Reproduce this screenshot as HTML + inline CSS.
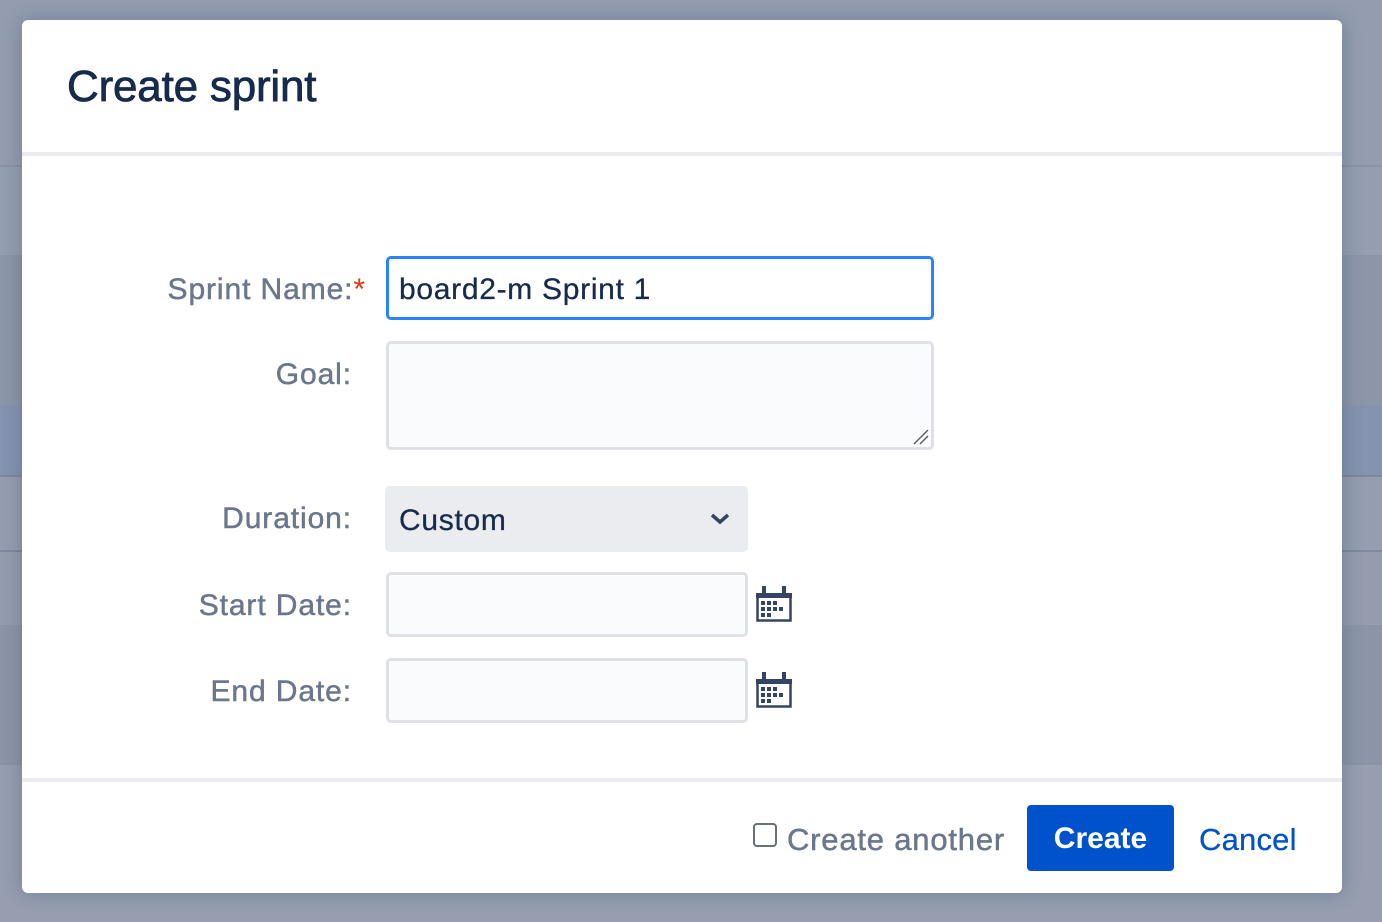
<!DOCTYPE html>
<html><head><meta charset="utf-8"><style>
html,body{margin:0;padding:0;}
body{width:1382px;height:922px;position:relative;overflow:hidden;font-family:"Liberation Sans",Helvetica,Arial,sans-serif;background:#949db0;}
.band{position:absolute;left:0;width:1382px;}
.dlg{position:absolute;left:22px;top:20px;width:1320px;height:873px;background:#fff;border-radius:6px;box-shadow:0 0 20px rgba(9,30,66,.25);}
.abs{position:absolute;}
h1{position:absolute;left:45px;top:42px;margin:0;font-size:44px;font-weight:normal;color:#172b4d;letter-spacing:-0.2px;-webkit-text-stroke:0.8px #172b4d;}
.sep{position:absolute;left:0;width:1320px;height:4px;background:#ebecf0;}
.lbl{position:absolute;right:990px;font-size:30px;color:#6b778c;text-align:right;white-space:nowrap;letter-spacing:0.9px;-webkit-text-stroke:0.5px #6b778c;}
.inp{position:absolute;box-sizing:border-box;border:3px solid #dfe1e6;border-radius:5px;background:#fafbfc;}
.tx{font-size:30px;color:#172b4d;letter-spacing:0.7px;-webkit-text-stroke:0.3px #172b4d;}
</style></head><body>
<div class="band" style="top:0;height:165px;background:#949db0"></div>
<div class="band" style="top:165px;height:90px;background:#959eb0;border-top:2px solid #8a93a6"></div>
<div class="band" style="top:255px;height:150px;background:#8d96a9"></div>
<div class="band" style="top:405px;height:70px;background:#8494b0"></div>
<div class="band" style="top:475px;height:75px;background:#959db0;border-top:2px solid #7f889b"></div>
<div class="band" style="top:550px;height:75px;background:#949cae;border-top:2px solid #7f889b"></div>
<div class="band" style="top:625px;height:140px;background:#8c95a8"></div>
<div class="band" style="top:765px;height:157px;background:#969eb0"></div>

<div class="dlg">
<h1>Create sprint</h1>
<div class="sep" style="top:132px"></div>

<div class="lbl" style="top:253px;right:976px">Sprint Name:<span style="color:#de350b;-webkit-text-stroke:0">*</span></div>
<div class="inp" style="left:364px;top:236px;width:548px;height:64px;border-color:#2684ff;background:#fff;"></div>
<div class="abs tx" style="left:377px;top:253px;">board2-m Sprint 1</div>

<div class="lbl" style="top:338px">Goal:</div>
<div class="inp" style="left:364px;top:321px;width:548px;height:109px;"></div>
<svg class="abs" style="left:890px;top:408px" width="18" height="18"><path d="M2 16 L16 2 M8 16 L16 8" stroke="#555" stroke-width="1.3"/></svg>

<div class="lbl" style="top:482px">Duration:</div>
<div class="abs" style="left:363px;top:466px;width:363px;height:66px;background:#ebecf0;border-radius:5px;"></div>
<div class="abs tx" style="left:377px;top:484px;">Custom</div>
<svg class="abs" style="left:687px;top:492px" width="22" height="14"><path d="M3 3 L11 10 L19 3" fill="none" stroke="#344563" stroke-width="3.5"/></svg>

<div class="lbl" style="top:569px">Start Date:</div>
<div class="inp" style="left:364px;top:552px;width:362px;height:65px;"></div>
<svg class="abs" style="left:734px;top:566px" width="36" height="36" fill="#344563"><rect x="1.5" y="9" width="33" height="25.5" fill="none" stroke="#344563" stroke-width="2.5"/><rect x="0" y="7" width="36" height="5"/><rect x="6" y="0" width="4" height="9"/><rect x="26" y="0" width="4" height="9"/><rect x="5" y="15" width="4" height="4"/><rect x="11" y="15" width="4" height="4"/><rect x="17" y="15" width="4" height="4"/><rect x="5" y="21" width="4" height="4"/><rect x="11" y="21" width="4" height="4"/><rect x="17" y="21" width="4" height="4"/><rect x="23" y="21" width="4" height="4"/><rect x="5" y="27" width="4" height="4"/><rect x="11" y="27" width="4" height="4"/></svg>

<div class="lbl" style="top:655px">End Date:</div>
<div class="inp" style="left:364px;top:638px;width:362px;height:65px;"></div>
<svg class="abs" style="left:734px;top:652px" width="36" height="36" fill="#344563"><rect x="1.5" y="9" width="33" height="25.5" fill="none" stroke="#344563" stroke-width="2.5"/><rect x="0" y="7" width="36" height="5"/><rect x="6" y="0" width="4" height="9"/><rect x="26" y="0" width="4" height="9"/><rect x="5" y="15" width="4" height="4"/><rect x="11" y="15" width="4" height="4"/><rect x="17" y="15" width="4" height="4"/><rect x="5" y="21" width="4" height="4"/><rect x="11" y="21" width="4" height="4"/><rect x="17" y="21" width="4" height="4"/><rect x="23" y="21" width="4" height="4"/><rect x="5" y="27" width="4" height="4"/><rect x="11" y="27" width="4" height="4"/></svg>

<div class="sep" style="top:758px"></div>

<div class="abs" style="left:731px;top:803px;width:24px;height:24px;box-sizing:border-box;border:2px solid #6b6f76;border-radius:4px;"></div>
<div class="abs" style="left:765px;top:802px;font-size:31px;color:#6b778c;letter-spacing:0.8px;-webkit-text-stroke:0.5px #6b778c;">Create another</div>
<div class="abs" style="left:1005px;top:785px;width:147px;height:66px;background:#0052cc;border-radius:4px;color:#fff;font-size:30px;font-weight:bold;text-align:center;line-height:68px;">Create</div>
<div class="abs" style="left:1177px;top:802px;font-size:31px;color:#0052cc;letter-spacing:0.2px;-webkit-text-stroke:0.3px #0052cc;">Cancel</div>
</div>
</body></html>
